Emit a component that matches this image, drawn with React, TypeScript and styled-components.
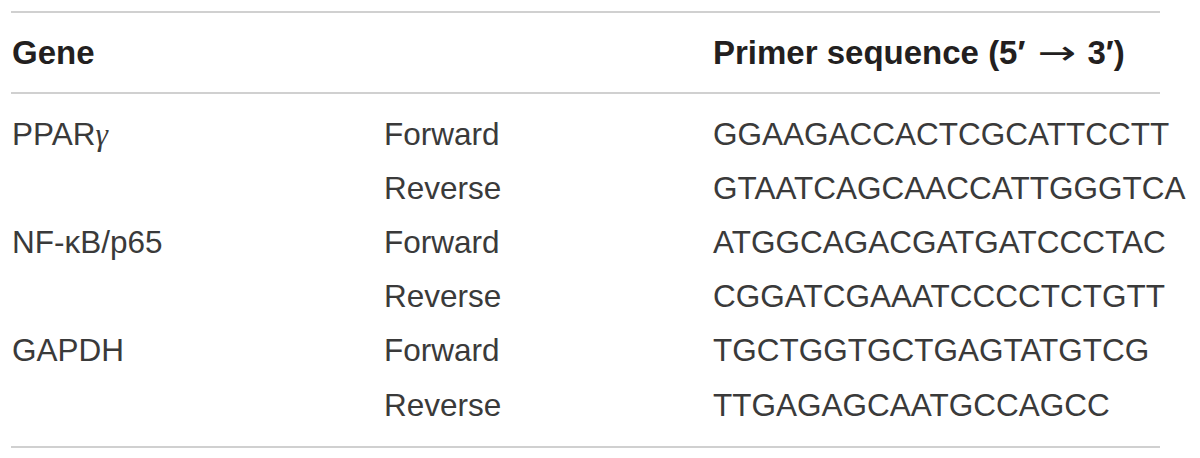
import React from "react";
import styled, { createGlobalStyle } from "styled-components";

const Global = createGlobalStyle`
  html, body { margin: 0; padding: 0; background: #fff; }
  body { font-family: "Liberation Sans", Arial, sans-serif; color: #231f20; }
`;

const Page = styled.div`
  padding: 11px 40px 0 11px;
`;

const Table = styled.div`
  width: 1149px;
  border-top: 2px solid #d0d0d0;
  border-bottom: 2px solid #d0d0d0;
`;

const Row = styled.div<{ $head?: boolean }>`
  display: grid;
  grid-template-columns: 372px 329px 1fr;
  align-items: center;
  height: ${(p) => (p.$head ? "79px" : "54.2px")};
  font-size: ${(p) => (p.$head ? "33px" : "31.5px")};
  font-weight: ${(p) => (p.$head ? 700 : 400)};
  color: ${(p) => (p.$head ? "#231f20" : "#3a3a3a")};
`;

const Body = styled.div`
  border-top: 2px solid #d0d0d0;
  padding: 13px 0 14px;
`;

const Cell = styled.div`
  padding-left: 1px;
  white-space: nowrap;
`;

const Greek = styled.span`
  font-family: "Liberation Serif", "Times New Roman", serif;
  font-style: italic;
`;

const Arrow = styled.span`
  display: inline-block;
  font-family: "DejaVu Sans", sans-serif;
  font-weight: 400;
  font-size: 33px;
  margin: 0 8px;
  transform: scaleX(1.4);
`;

const rows: [React.ReactNode, string, string][] = [
  [<>PPAR<Greek>γ</Greek></>, "Forward", "GGAAGACCACTCGCATTCCTT"],
  ["", "Reverse", "GTAATCAGCAACCATTGGGTCA"],
  [<>NF-κB/p65</>, "Forward", "ATGGCAGACGATGATCCCTAC"],
  ["", "Reverse", "CGGATCGAAATCCCCTCTGTT"],
  ["GAPDH", "Forward", "TGCTGGTGCTGAGTATGTCG"],
  ["", "Reverse", "TTGAGAGCAATGCCAGCC"],
];

export default function App() {
  return (
    <>
      <Global />
      <Page>
        <Table>
          <Row $head>
            <Cell>Gene</Cell>
            <Cell />
            <Cell>
              Primer sequence (5′ <Arrow>→</Arrow> 3′)
            </Cell>
          </Row>
          <Body>
            {rows.map((r, i) => (
              <Row key={i}>
                <Cell>{r[0]}</Cell>
                <Cell>{r[1]}</Cell>
                <Cell>{r[2]}</Cell>
              </Row>
            ))}
          </Body>
        </Table>
      </Page>
    </>
  );
}
